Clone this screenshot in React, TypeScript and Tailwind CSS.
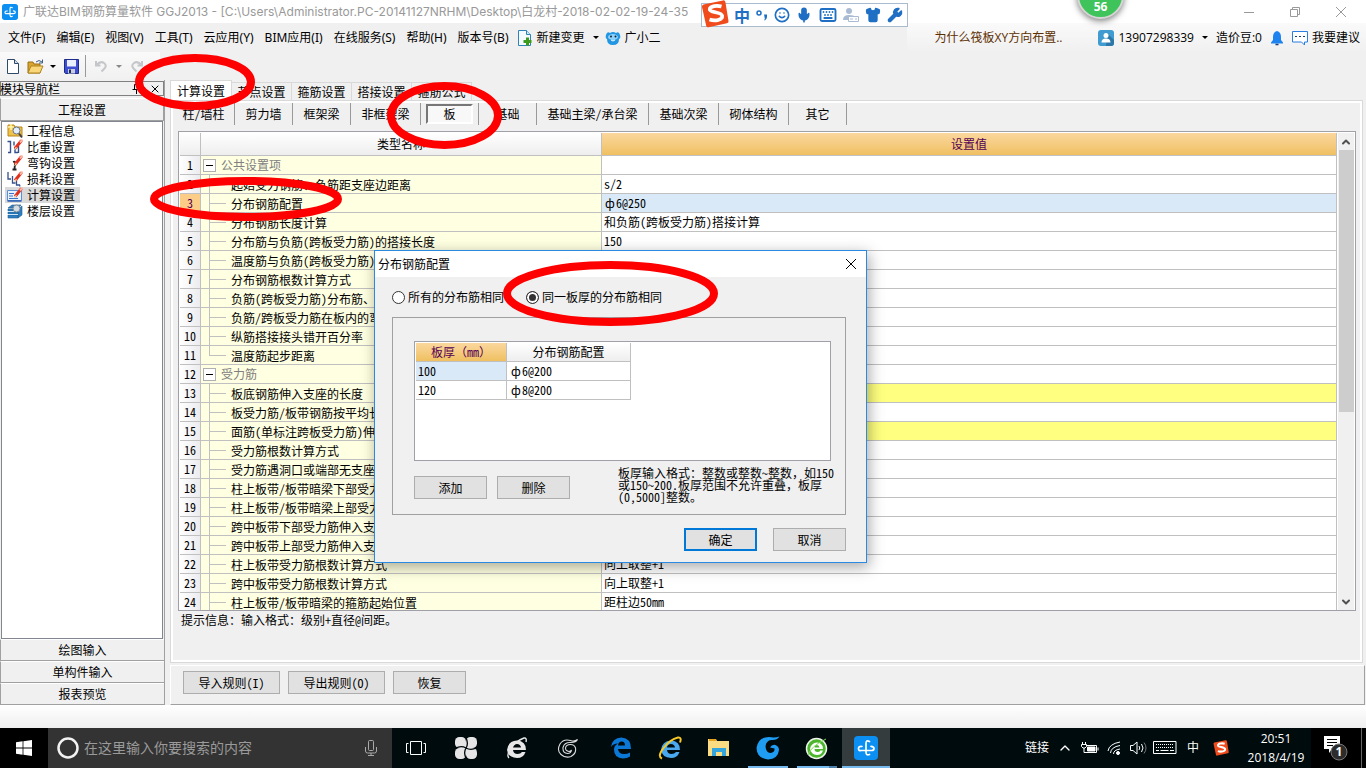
import React from "react";
import { ChevronDown, ChevronUp, Keyboard, Mic, Shirt, Smile, Wrench, X } from "lucide-react";

const menus = [
  "文件(F)",
  "编辑(E)",
  "视图(V)",
  "工具(T)",
  "云应用(Y)",
  "BIM应用(I)",
  "在线服务(S)",
  "帮助(H)",
  "版本号(B)",
];

const mainTabs = ["计算设置", "节点设置", "箍筋设置", "搭接设置", "箍筋公式"];

const subTabs = [
  { label: "柱/墙柱", width: "w-[62px]" },
  { label: "剪力墙", width: "w-[58px]" },
  { label: "框架梁", width: "w-[58px]" },
  { label: "非框架梁", width: "w-[70px]" },
  { label: "板", width: "w-[58px]" },
  { label: "基础", width: "w-[58px]" },
  { label: "基础主梁/承台梁", width: "w-[112px]" },
  { label: "基础次梁", width: "w-[70px]" },
  { label: "砌体结构", width: "w-[70px]" },
  { label: "其它", width: "w-[58px]" },
];

interface SettingRow {
  name: string;
  value?: React.ReactNode;
  group?: boolean;
  last?: boolean;
  changed?: boolean;
}

// Rebar grade sign takes a whole character cell in front of the half-width figures
const Rebar = ({ spec }: { spec: string }) => (
  <>
    <span className="inline-block w-3 text-center">ф</span>
    {spec}
  </>
);

const Wide = ({ children }: { children: React.ReactNode }) => (
  <span className="[font-feature-settings:normal]">{children}</span>
);

const rows: SettingRow[] = [
  { name: "公共设置项", group: true },
  { name: "起始受力钢筋、负筋距支座边距离", value: "s/2" },
  { name: "分布钢筋配置", value: <Rebar spec="6@250" /> },
  { name: "分布钢筋长度计算", value: "和负筋(跨板受力筋)搭接计算" },
  { name: "分布筋与负筋(跨板受力筋)的搭接长度", value: "150" },
  { name: "温度筋与负筋(跨板受力筋)的搭接长度" },
  { name: "分布钢筋根数计算方式" },
  { name: "负筋(跨板受力筋)分布筋、温度筋" },
  { name: "负筋/跨板受力筋在板内的弯折长度" },
  { name: "纵筋搭接接头错开百分率" },
  { name: "温度筋起步距离", last: true },
  { name: "受力筋", group: true },
  { name: "板底钢筋伸入支座的长度", changed: true },
  { name: "板受力筋/板带钢筋按平均长度计算" },
  { name: "面筋(单标注跨板受力筋)伸入支座", changed: true },
  { name: "受力筋根数计算方式" },
  { name: "受力筋遇洞口或端部无支座时" },
  { name: "柱上板带/板带暗梁下部受力筋" },
  { name: "柱上板带/板带暗梁上部受力筋" },
  { name: "跨中板带下部受力筋伸入支座" },
  { name: "跨中板带上部受力筋伸入支座" },
  { name: "柱上板带受力筋根数计算方式", value: "向上取整+1" },
  { name: "跨中板带受力筋根数计算方式", value: "向上取整+1" },
  { name: "柱上板带/板带暗梁的箍筋起始位置", value: "距柱边50mm" },
];

const BrandMark = ({ className = "" }: { className?: string }) => (
  <svg viewBox="0 0 24 24" className={className}>
    <rect width="24" height="24" rx="4" fill="#0c8ff2" />
    <path
      d="M15.5 5.500Q12 3.500 12 7.500v8.500q0 4 3.500 2.500M8 10.500Q4.500 10 4.500 12.500T7 14.500h10.500q2.500 0 2.500-2t-3-2.200"
      fill="none"
      stroke="#fff"
      strokeWidth="1.700"
      strokeLinecap="round"
    />
  </svg>
);

const SogouMark = ({ className = "" }: { className?: string }) => (
  <svg viewBox="0 0 28 28" className={className}>
    <path
      d="M2.500 4.500 22 .4q2-.3 2.400 1.700L27.500 21q.3 2-1.600 2.300L7.600 27.300q-2 .4-2.400-1.600L1 7Q.6 5 2.500 4.500Z"
      fill="#f04b1c"
    />
    <path
      d="M20.500 6.500c-4-1.200-11.500-.8-11.800 2.800-.3 3.500 11.800 2.300 12.500 6.500.6 4-7 5.700-12.700 3.700"
      fill="none"
      stroke="#fff"
      strokeWidth="3.600"
    />
  </svg>
);

const Caret = ({ className = "border-t-black" }: { className?: string }) => (
  <span className={`block h-0 w-0 border-x-[3px] border-t-[3px] border-x-transparent ${className}`} />
);

const Pencil = () => (
  <>
    <path d="M14.500 1.500 8 9.500" stroke="#e0301e" strokeWidth="3" />
    <path d="M15.500.5 13 3.500" stroke="#ffb3a4" strokeWidth="2" />
    <path d="m9 7.500-2.500 4 3.500-2.500" fill="#f3cf9b" />
  </>
);

const navItems: { label: string; icon: React.ReactNode }[] = [
  {
    label: "工程信息",
    icon: (
      <>
        <path d="M1 2h6l1 2h7v9H1z" fill="#f0c24a" stroke="#b98518" />
        <path d="M4 1v6M1 4h6" stroke="#fff3a8" strokeWidth="1.500" />
        <circle cx="9.500" cy="7.500" r="3.500" fill="#e2effb" stroke="#64748b" />
        <path d="m12 10.500 3 4" stroke="#444" strokeWidth="2" />
      </>
    ),
  },
  {
    label: "比重设置",
    icon: (
      <>
        <path d="M.5 2.500h3v11H1M10 8.500H8v5h3M7 2.500v4M11.500 7v7" fill="none" stroke="#35518d" strokeWidth="1.400" />
        <Pencil />
      </>
    ),
  },
  {
    label: "弯钩设置",
    icon: (
      <>
        <path d="M6 7q3-1 2 2l-.5 5M5.500 14.500h4" fill="none" stroke="#222" strokeWidth="1.800" />
        <Pencil />
      </>
    ),
  },
  {
    label: "损耗设置",
    icon: (
      <>
        <path d="M1 1v7h3M5.500 5v7h3M9.500 8v6h3l.5 1.500" fill="none" stroke="#35518d" strokeWidth="1.300" />
        <Pencil />
      </>
    ),
  },
  {
    label: "计算设置",
    icon: (
      <>
        <path d="M.5 3.500h14v10H.5z" fill="#e8f2ff" stroke="#5b8fd6" />
        <path d="M2 6.500h5M2 9h4M2 11.500h9" stroke="#3b74c4" />
        <path d="M.5 14h14" stroke="#2b5fb0" strokeWidth="1.500" />
        <Pencil />
      </>
    ),
  },
  {
    label: "楼层设置",
    icon: (
      <>
        <path
          d="m1 5 4-3h9l-3 3zM1 6h10v2H1zM1 9h10v2H1zM1 12h10v3H1zM11 6l4-3v9l-4 3z"
          fill="#2f7fc0"
          stroke="#1c5e96"
          strokeWidth=".6"
        />
        <path d="M1 8.500h10M1 11.500h10" stroke="#cfe6f7" />
        <circle cx="9.500" cy="5.500" r="3.500" fill="#d5dde4" stroke="#7c8791" />
      </>
    ),
  },
];

function TitleBar() {
  return (
    <header className="flex h-[23px] shrink-0 items-center justify-between bg-white pl-0.5 font-[Inter,Noto_Sans_CJK_SC,sans-serif]">
      <div className="flex items-center gap-[5px]">
        <BrandMark className="h-4 w-4" />
        <h1 className="whitespace-nowrap text-xs leading-4 text-[#999]">
          广联达BIM钢筋算量软件 GGJ2013 - [C:\Users\Administrator.PC-20141127NRHM\Desktop\白龙村-2018-02-02-19-24-35
        </h1>
      </div>
      <div className="flex items-center gap-[34px] pr-[19px] text-[#999]">
        <button aria-label="最小化">
          <svg viewBox="0 0 12 12" className="h-3 w-3" stroke="currentColor" fill="none">
            <path d="M1 6.500h10" />
          </svg>
        </button>
        <button aria-label="还原">
          <svg viewBox="0 0 12 12" className="h-3 w-3" stroke="currentColor" fill="none">
            <path d="M1.500 3.500h7v7h-7zM3.500 3.500v-2h7v7h-2" />
          </svg>
        </button>
        <button aria-label="关闭">
          <svg viewBox="0 0 12 12" className="h-3 w-3" stroke="currentColor" fill="none">
            <path d="m1 1 10 10M11 1 1 11" />
          </svg>
        </button>
      </div>
    </header>
  );
}

function MenuBar() {
  return (
    <nav className="flex h-[29px] shrink-0 items-center whitespace-nowrap pl-2 font-[Noto_Sans,Noto_Sans_CJK_SC,sans-serif] text-xs leading-4 text-black">
      <div className="flex items-center gap-[11px]">
        {menus.map((menu) => (
          <button key={menu}>{menu}</button>
        ))}
      </div>
      <button className="ml-2 flex items-center gap-1">
        <svg viewBox="0 0 16 16" className="h-4 w-4">
          <path d="M1.500.5h8l4 4v11h-12z" fill="#f4faff" stroke="#2e84b8" />
          <path d="M9.500.5v4h4" fill="#cfe5f4" stroke="#2e84b8" />
          <path d="M10.500 7.500v8M6.500 11.500h8" stroke="#3c9b1c" strokeWidth="3" />
        </svg>
        新建变更
        <Caret className="ml-1 border-t-black" />
      </button>
      <button className="ml-1.5 flex items-center gap-1">
        <svg viewBox="0 0 16 16" className="h-4 w-4">
          <path d="M1 5q1-4 4-2 3-2 6 0 3-2 4 2 1 3-1 4 0 6-6 6t-6-6Q0 8 1 5Z" fill="#2196e3" />
          <ellipse cx="8" cy="7" rx="5" ry="3" fill="#8ed2fa" />
          <circle cx="6" cy="6.500" r="1" fill="#123" />
          <circle cx="10.500" cy="6.500" r="1" fill="#123" />
          <path d="M6 10q2 2 4 0" fill="none" stroke="#fff" />
        </svg>
        广小二
      </button>
      <div className="ml-auto flex h-full items-center bg-gradient-to-b from-[#fafafa] to-[#f0f0f0] pr-1.5 font-[Open_Sans,Noto_Sans_CJK_SC,sans-serif]">
        <a href="#question" className="px-7 text-[#5c2e00]">
          为什么筏板XY方向布置..
        </a>
        <button className="flex items-center gap-1 pl-2">
          <svg viewBox="0 0 16 16" className="h-4 w-4">
            <rect width="16" height="16" rx="3" fill="#3f9bd0" />
            <path d="m9 3 7 7v3q0 3-3 3H8z" fill="#2b78a8" />
            <circle cx="8" cy="5.500" r="2.500" fill="#fff" />
            <path d="M3.500 12.500q0-4 4.500-4t4.500 4z" fill="#fff" />
          </svg>
          13907298339
          <Caret className="ml-1 border-t-black" />
        </button>
        <span className="ml-2">造价豆:0</span>
        <button aria-label="消息" className="ml-2">
          <svg viewBox="0 0 14 16" className="h-4 w-3.5">
            <path d="M7 1q4 1 4 6v3l2 2.500v1H1v-1L3 10V7q0-5 4-6Z" fill="#1e83ef" />
            <path d="M5.500 14.500h3" stroke="#163d78" strokeWidth="1.500" />
          </svg>
        </button>
        <button className="ml-2 flex items-center gap-1">
          <svg viewBox="0 0 16 16" className="h-4 w-4" fill="none" stroke="#2b7de0">
            <path d="M.5 1.500h15v10.500h-3v3l-3-3h-9z" fill="#fff" />
            <path d="M3 6.500h10" stroke="#163d78" strokeDasharray="2 2" />
          </svg>
          我要建议
        </button>
      </div>
    </nav>
  );
}

function ToolBar() {
  return (
    <div className="flex h-7 w-40 shrink-0 items-center bg-gradient-to-b from-[#fafafa] to-[#f0f0f0] pl-[7px]">
      <button aria-label="新建">
        <svg viewBox="0 0 12 15" className="h-[15px] w-3">
          <path d="M.5.5h7l4 4v10H.5z" fill="#fff" stroke="#2f4a68" />
          <path d="M7.500.5v4h4" fill="#cddceb" stroke="#2f4a68" />
        </svg>
      </button>
      <button aria-label="打开" className="ml-2">
        <svg viewBox="0 0 17 15" className="h-[15px] w-[17px]">
          <path d="M1 14V3h5l1 2h6v9z" fill="#d9a531" stroke="#9a6f14" />
          <path d="m1 14 3-7h12l-3 7z" fill="#f9d779" stroke="#b08320" />
          <path d="M9 3q3-3 6 0m.5-2.500V4H12" fill="none" stroke="#3f5f86" />
        </svg>
      </button>
      <Caret className="ml-1.5 border-t-black" />
      <button aria-label="保存" className="ml-2">
        <svg viewBox="0 0 15 15" className="h-[15px] w-[15px]">
          <path d="M.5.500h14v14h-13l-1-1z" fill="#3d4fd0" stroke="#1d2b88" />
          <path d="M3 1h9v6.500H3z" fill="#e9efff" />
          <path d="M4 10h7v4.500H4z" fill="#c8cee0" />
          <path d="M5 10.500h2v3.500H5z" fill="#1d2b60" />
        </svg>
      </button>
      <span className="ml-1.5 h-[22px] w-px bg-[#999]" />
      <button aria-label="撤销" className="ml-2" disabled>
        <svg viewBox="0 0 14 14" className="h-3.5 w-3.5" fill="none" stroke="#c4c6c9" strokeWidth="2">
          <path d="M2 2v4.500h4.500M2.500 6q4-4.500 7.500-2t0 6L7.500 12.500" />
        </svg>
      </button>
      <Caret className="ml-2 border-t-[#888]" />
      <button aria-label="重做" className="ml-2" disabled>
        <svg viewBox="0 0 14 14" className="h-3.5 w-3.5" fill="none" stroke="#c4c6c9" strokeWidth="2">
          <path d="M12 2v4.500H7.500M11.500 6q-4-4.500-7.500-2t0 6l2.500 2.500" />
        </svg>
      </button>
    </div>
  );
}

function ModulePanel() {
  return (
    <aside className="flex w-[165px] shrink-0 flex-col border-r border-[#a0a0a0] pt-px">
      <div className="flex h-[15px] items-center border border-[#808080] pr-0.5">
        <h2 className="-ml-px leading-3">模块导航栏</h2>
        <button aria-label="固定面板" className="ml-auto">
          <svg viewBox="0 0 9 11" className="h-[11px] w-[9px]" fill="none" stroke="#000">
            <path d="M2.500 6.500v-5h4v5M.5 6.500h8M4.500 7v4M5.500 2v4" />
          </svg>
        </button>
        <button aria-label="关闭面板" className="ml-2">
          <X className="h-3 w-3" strokeWidth={2} />
        </button>
      </div>
      <button className="mt-0.5 h-[23px] border border-[#a0a0a0] border-t-white leading-4">工程设置</button>
      <div className="mx-px min-h-0 flex-1 border border-[#82878f] bg-white pl-[3px] pt-px">
        <ul>
          {navItems.map((item) => (
            <li key={item.label}>
              <a
                href="#settings"
                className={`flex h-4 w-[75px] items-center gap-1 pl-0.5 leading-4 ${
                  item.label === "计算设置" ? "bg-[#d9d9d9]" : ""
                }`}
              >
                <svg viewBox="0 0 16 16" className="h-4 w-4 shrink-0">
                  {item.icon}
                </svg>
                <span className="whitespace-nowrap">{item.label}</span>
              </a>
            </li>
          ))}
        </ul>
      </div>
      {["绘图输入", "单构件输入", "报表预览"].map((label) => (
        <button key={label} className="h-[22px] border-b border-l border-t border-[#a0a0a0] border-t-white leading-4">
          {label}
        </button>
      ))}
    </aside>
  );
}

function NameCell({ row }: { row: SettingRow }) {
  if (row.group) {
    return (
      <div className="flex h-[18px] items-center gap-[5px] pl-0.5 text-[#808080]">
        <button
          aria-label="折叠"
          className="flex h-[13px] w-[13px] items-center justify-center border border-[#b0b0b0] bg-white"
        >
          <span className="h-px w-[7px] bg-black" />
        </button>
        {row.name}
      </div>
    );
  }
  return (
    <div className="flex h-[19px] items-center pl-2">
      <span className={row.last ? "h-2.5 w-px self-start bg-[#c0c0c0]" : "w-px self-stretch bg-[#c0c0c0]"} />
      <span className="h-px w-4 bg-[#c0c0c0]" />
      <span className="ml-[5px]">{row.name}</span>
    </div>
  );
}

function SettingsGrid() {
  return (
    <div className="ml-[5px] mr-1 flex min-h-0 flex-1 border border-[#a0a0a8] bg-white pl-px pt-px">
      <div className="min-w-0 flex-1 overflow-hidden">
        <table className="w-full table-fixed border-separate border-spacing-0 whitespace-nowrap leading-4">
          <colgroup>
            <col className="w-[21px]" />
            <col className="w-[401px]" />
            <col />
          </colgroup>
          <thead>
            <tr className="h-[23px]">
              <th
                aria-label="序号"
                className="border-b border-r border-[#c0c0c0] bg-gradient-to-b from-white to-[#eee] p-0"
              />
              <th className="border-b border-r border-[#c0c0c0] bg-gradient-to-b from-white to-[#eee] p-0 font-normal">
                类型名称
              </th>
              <th className="border-b border-r border-[#c0c0c0] bg-gradient-to-b from-[#fbd79d] to-[#efc060] p-0 font-normal text-[#550055]">
                设置值
              </th>
            </tr>
          </thead>
          <tbody>
            {rows.map((row, index) => (
              <tr key={index} className="h-[19px]">
                <td
                  className={`border-b border-r border-[#c0c0c0] p-0 text-center ${
                    index === 2 ? "bg-[#fccd86] text-[#550055]" : "bg-gradient-to-r from-white to-[#ececf0]"
                  }`}
                >
                  {index + 1}
                </td>
                <td className="h-[19px] overflow-hidden border-b border-r border-[#c0c0c0] bg-[#ffffe1] p-0">
                  <div className="h-[18px] overflow-hidden">
                    <NameCell row={row} />
                  </div>
                </td>
                <td
                  className={`border-b border-r border-[#c0c0c0] p-0 pl-0.5 ${
                    index === 2 ? "bg-[#d9e9f8]" : row.changed ? "bg-[#ffff80]" : "bg-white"
                  }`}
                >
                  {row.value}
                </td>
              </tr>
            ))}
          </tbody>
        </table>
      </div>
      <div className="mx-px flex w-4 flex-col items-center bg-[#f0f0f0]">
        <button aria-label="向上滚动" className="flex h-[17px] items-center">
          <ChevronUp className="h-3 w-3 text-[#505050]" strokeWidth={4} />
        </button>
        <div className="h-[262px] w-[15px] bg-[#cdcdcd]" />
        <button aria-label="向下滚动" className="mt-auto flex h-[17px] items-center">
          <ChevronDown className="h-3 w-3 text-[#505050]" strokeWidth={4} />
        </button>
      </div>
    </div>
  );
}

const PushButton = ({ children, className = "w-[73px]" }: { children: React.ReactNode; className?: string }) => (
  <button className={`h-[23px] border border-[#adadad] bg-[#e1e1e1] leading-4 ${className}`}>{children}</button>
);

function SettingsPanel() {
  return (
    <main className="ml-[5px] flex min-w-0 flex-1 flex-col">
      <div role="tablist" className="flex h-5 items-end">
        {mainTabs.map((tab, index) => (
          <button
            key={tab}
            role="tab"
            aria-selected={index === 0}
            className={
              index === 0
                ? "h-5 w-[62px] border border-b-0 border-[#d9d9d9] bg-white leading-4"
                : "h-[18px] w-[60px] whitespace-nowrap border border-b-0 border-l-0 border-[#d9d9d9] leading-4"
            }
          >
            {tab}
          </button>
        ))}
      </div>
      <div className="mr-[3px] flex min-h-0 flex-1 flex-col border border-[#d9d9d9] bg-white p-0.5">
        <div className="flex min-h-0 flex-1 flex-col bg-[#f0f0f0]">
          <div className="mb-1.5 flex h-[22px] shrink-0">
            {subTabs.map((tab) => (
              <div
                key={tab.label}
                className={`flex items-center justify-center border-r border-[#999] ${tab.width}`}
              >
                <button
                  className={
                    tab.label === "板"
                      ? "h-5 w-[47px] border-2 border-b-white border-l-[#777] border-r-white border-t-[#777] bg-[#f8f8f8] leading-4"
                      : "whitespace-nowrap leading-4"
                  }
                >
                  {tab.label}
                </button>
              </div>
            ))}
          </div>
          <SettingsGrid />
          <p className="h-[49px] shrink-0 pl-2 pt-px leading-4">提示信息：输入格式：级别+直径@间距。</p>
        </div>
      </div>
      <div className="mr-px mt-0.5 flex h-10 shrink-0 gap-2 border border-[#a0a0a0] border-l-white border-t-white pl-3 pt-[5px]">
        <PushButton className="w-[97px]">导入规则(I)</PushButton>
        <PushButton className="w-[97px]">导出规则(O)</PushButton>
        <PushButton>恢复</PushButton>
      </div>
    </main>
  );
}

const radioClass =
  "h-[13px] w-[13px] appearance-none rounded-full border border-[#333] bg-white checked:bg-[#333] checked:shadow-[inset_0_0_0_2px_white]";

function RebarDialog() {
  return (
    <section
      role="dialog"
      aria-label="分布钢筋配置"
      className="absolute left-[374px] top-[250px] w-[493px] border border-[#2a8ae2] bg-[#f0f0f0] pb-[11px] shadow-[2px_4px_14px_rgba(0,0,0,0.35)]"
    >
      <header className="flex h-[26px] items-center justify-between bg-white pl-[3px] pr-2.5">
        <h2 className="leading-4">分布钢筋配置</h2>
        <button aria-label="关闭">
          <svg viewBox="0 0 10 10" className="h-2.5 w-2.5" stroke="#000" fill="none">
            <path d="m0 0 10 10M10 0 0 10" />
          </svg>
        </button>
      </header>
      <div className="flex h-10 items-center gap-[22px] pl-[17px]">
        <label className="flex items-center gap-[3px] leading-4">
          <input type="radio" name="scope" className={radioClass} />
          所有的分布筋相同
        </label>
        <label className="flex items-center gap-[3px] leading-4">
          <input type="radio" name="scope" defaultChecked className={radioClass} />
          同一板厚的分布筋相同
        </label>
      </div>
      <div className="ml-[17px] mr-5 border border-[#a0a0a0] px-[21px] pb-[15px] pt-[23px]">
        <div className="h-[120px] w-[417px] border border-[#a0a0a8] bg-white pl-px pt-px">
          <table className="table-fixed border-separate border-spacing-0 leading-4">
            <thead>
              <tr className="h-[19px]">
                <th className="w-[91px] border-b border-r border-[#c0c0c0] bg-gradient-to-b from-[#fbd79d] to-[#efc060] p-0 font-normal text-[#550055]">
                  板厚<Wide>（</Wide>mm<Wide>）</Wide>
                </th>
                <th className="w-[124px] border-b border-r border-[#c0c0c0] bg-gradient-to-b from-white to-[#eee] p-0 font-normal">
                  分布钢筋配置
                </th>
              </tr>
            </thead>
            <tbody>
              <tr className="h-[19px]">
                <td className="border-b border-r border-[#c0c0c0] bg-[#d9e9f8] p-0 pl-0.5">100</td>
                <td className="border-b border-r border-[#c0c0c0] p-0 pl-[3px]">
                  <Rebar spec="6@200" />
                </td>
              </tr>
              <tr className="h-[19px]">
                <td className="border-b border-r border-[#c0c0c0] p-0 pl-0.5">120</td>
                <td className="border-b border-r border-[#c0c0c0] p-0 pl-[3px]">
                  <Rebar spec="8@200" />
                </td>
              </tr>
            </tbody>
          </table>
        </div>
        <div className="flex h-[38px] items-start pt-1.5">
          <div className="flex gap-2.5 pt-[9px]">
            <PushButton>添加</PushButton>
            <PushButton>删除</PushButton>
          </div>
          <p className="-mr-3 ml-auto w-[218px] whitespace-nowrap leading-3">
            板厚输入格式：整数或整数~整数<Wide>，</Wide>如150
            <br />
            或150~200.板厚范围不允许重叠<Wide>，</Wide>板厚
            <br />
            (0,5000]整数。
          </p>
        </div>
      </div>
      <div className="mr-5 mt-[13px] flex justify-end gap-4">
        <button className="h-[23px] w-[73px] border-2 border-[#0078d7] bg-[#e1e1e1] leading-4">确定</button>
        <PushButton>取消</PushButton>
      </div>
    </section>
  );
}

function InputMethodBar() {
  return (
    <div className="absolute left-[701px] top-0 flex h-[29px] items-center">
      <div className="flex h-6 w-[207px] items-center justify-between border border-[#a9bccf] bg-white pl-8 pr-1 text-[#1f6fc4]">
        <span className="text-base font-bold leading-4">中</span>
        <svg viewBox="0 0 12 12" className="h-3 w-3">
          <circle cx="3" cy="4" r="2" fill="none" stroke="currentColor" strokeWidth="1.500" />
          <path d="M8 5.500h3v2q0 3-3 4 1.500-2 .5-3.500Z" fill="currentColor" />
        </svg>
        <Smile className="h-4 w-4" strokeWidth={2.5} />
        <Mic className="h-4 w-4" strokeWidth={2.5} fill="currentColor" />
        <Keyboard className="h-[18px] w-[18px]" strokeWidth={2.5} />
        <svg viewBox="0 0 16 16" className="h-4 w-4 text-[#a9bcd4]">
          <circle cx="6" cy="4" r="3" fill="currentColor" />
          <path d="M0 13q0-5 6-5t5 2v3z" fill="currentColor" />
          <path d="M5.500 9.500h10v5h-10zM7 12h3M12 12h2" fill="#fff" stroke="currentColor" />
        </svg>
        <Shirt className="h-4 w-4" fill="currentColor" />
        <Wrench className="h-4 w-4" fill="currentColor" />
      </div>
      <SogouMark className="absolute left-0 top-0 h-7 w-7" />
    </div>
  );
}

const Ring = ({ className, width, height }: { className: string; width: number; height: number }) => (
  <svg
    viewBox={`0 0 ${width} ${height}`}
    className={`pointer-events-none absolute ${className}`}
    fill="none"
    stroke="#fe0000"
    strokeWidth="8"
  >
    <ellipse cx={width / 2} cy={height / 2} rx={width / 2 - 4} ry={height / 2 - 4} />
  </svg>
);

const TaskButton = ({
  label,
  className = "",
  children,
}: {
  label: string;
  className?: string;
  children: React.ReactNode;
}) => (
  <button aria-label={label} className={`flex h-10 w-12 items-center justify-center ${className}`}>
    {children}
  </button>
);

function TaskBar() {
  return (
    <footer className="flex h-10 shrink-0 bg-[#000b0d] font-[Open_Sans,Noto_Sans_CJK_SC,sans-serif] text-white">
      <TaskButton label="开始" className="bg-black">
        <svg viewBox="0 0 16 16" className="h-4 w-4" fill="#fff">
          <path d="M0 2.200 6.600 1.300v6.300H0zM7.400 1.200 16 0v7.600H7.400zM0 8.400h6.600v6.300L0 13.800zM7.400 8.400H16V16l-8.600-1.200z" />
        </svg>
      </TaskButton>
      <div className="flex w-[344px] items-center bg-[#333] pl-2 pr-3.5">
        <svg viewBox="0 0 24 24" className="h-6 w-6 shrink-0">
          <circle cx="12" cy="12" r="9.500" fill="none" stroke="#f2f2f2" strokeWidth="2.500" />
        </svg>
        <input
          aria-label="搜索"
          placeholder="在这里输入你要搜索的内容"
          className="ml-1 min-w-0 flex-1 bg-transparent text-sm leading-5 text-white placeholder:text-[#9a9a9a] focus:outline-none"
        />
        <svg viewBox="0 0 14 18" className="h-[18px] w-3.5 shrink-0" fill="none" stroke="#aaa">
          <rect x="4.500" y="1.500" width="5" height="10" rx="1" />
          <path d="M1.500 8v4q0 2 2 2h7q2 0 2-2V8M7 14v3M4 16.500h6" />
        </svg>
      </div>
      <TaskButton label="任务视图">
        <svg viewBox="0 0 20 16" className="h-4 w-5" fill="none" stroke="#fff">
          <path d="M4.500 1.500h11v13h-11zM2.500 3.500h-2v9h2M17.500 3.500h2v9h-2" />
        </svg>
      </TaskButton>
      <div className="ml-0.5 flex gap-[3px]">
        <TaskButton label="风车">
          <svg viewBox="0 0 22 22" className="h-[22px] w-[22px]" fill="#e6e6e6">
            <rect width="11" height="11" rx="4.500" />
            <rect x="11" width="11" height="11" rx="4.500" />
            <rect y="11" width="11" height="11" rx="4.500" />
            <rect x="11" y="11" width="11" height="11" rx="4.500" />
            <path d="M5 5h12v12H5z" />
            <path
              d="M11 11Q14 6 10.500 0M11 11q5 3 11-.5M11 11q-3 5 .5 11M11 11Q6 8 0 11.500"
              fill="none"
              stroke="#000b0d"
              strokeWidth="1.300"
            />
          </svg>
        </TaskButton>
        <TaskButton label="浏览器">
          <svg viewBox="0 0 24 24" className="h-6 w-6">
            <path
              d="M2 14Q3 5 12 4.500q9 .5 9 9.500H8q.5 4 4.500 4 3 0 4.500-2h3.500q-2 6-8.500 6-9-.5-10-8Zm6-2.500h8q-.5-3.500-4-3.500t-4 3.500Z"
              fill="#e8e8e8"
              fillRule="evenodd"
            />
            <path d="M4 22q-3-3 2-10T19 2q3-.5 2 4" fill="none" stroke="#e8e8e8" strokeWidth="1.400" />
          </svg>
        </TaskButton>
        <TaskButton label="广联达">
          <svg viewBox="0 0 22 22" className="h-[22px] w-[22px]" fill="none" stroke="#dcdcdc" strokeWidth="1.100">
            <path d="M20.500 2.500q-3 2.500-7 1Q6.500 1.500 3 7q-3.500 6.500 1 10.500t10 2q5.500-3 4.500-8.500-1-3.500-5-3.500-4.500 0-5 3.500 0 3 3.500 3.500 2 0 2.500-1.500-.5 3.500-4 3.500-5-.5-4.500-6Q7.500 5 14 5.500q5 0 6.500-3Z" />
          </svg>
        </TaskButton>
      </div>
      <div className="ml-[5px] flex gap-px">
        <TaskButton label="Edge">
          <svg viewBox="0 0 22 24" className="h-6 w-[22px]">
            <path
              d="M1 11Q2 2 11.500 1.500 21 2 21 13H8q.5 5 6 5 3.500 0 6-1.500v4q-3 2-7 2-9-.5-9-9 0-4 4-6Q3 7.500 1 11ZM8 9.500h7q0-4-3.300-4T8 9.500Z"
              fill="#0b78d8"
              fillRule="evenodd"
            />
          </svg>
        </TaskButton>
        <TaskButton label="Internet Explorer">
          <svg viewBox="0 0 24 24" className="h-6 w-6">
            <path
              d="M3 14Q4 5 13 4.500q9 .5 9 9.500H9q.5 4 4.500 4 3 0 4.500-2h3.500q-2 6-8.500 6-9-.5-10-8Zm6-2.500h8q-.5-3.500-4-3.500t-4 3.500Z"
              fill="#4aa9ee"
              fillRule="evenodd"
            />
            <path d="M4 22.500q-5-2 1.500-10.500T20 1.500q4-.5 2 5" fill="none" stroke="#f6c928" strokeWidth="2" />
          </svg>
        </TaskButton>
        <TaskButton label="文件资源管理器">
          <svg viewBox="0 0 22 20" className="h-5 w-[22px]">
            <path d="M0 1h8l1 2h12v15H0z" fill="#fbdc83" />
            <path d="M1 1h7v2H1z" fill="#e8a31e" />
            <path d="M4 10h14v8h-4v-4H8v4H4z" fill="#33a5dc" />
          </svg>
        </TaskButton>
        <TaskButton label="广联达客户端" className="relative">
          <svg viewBox="0 0 24 24" className="h-6 w-6">
            <path
              d="M23.500.5q-2.500 4-8 3.500-5.500.5-6 6.500.5 6 5 6.500 4.500-.5 4-4.500l-4.500-1q2-3.500 5.500-2.500 3.500 1.500 3.500 5-1 9-11 9.500Q1 22.500.5 12 2 1 13 1q6 1 10.500-.5Z"
              fill="#1f9df2"
            />
          </svg>
          <span className="absolute inset-x-1 bottom-0 h-0.5 bg-[#76b9ed]" />
        </TaskButton>
        <TaskButton label="360浏览器" className="relative">
          <svg viewBox="0 0 24 24" className="h-6 w-6">
            <circle cx="11.500" cy="12.500" r="10" fill="#4cb52e" stroke="#eef5ea" strokeWidth="1.500" />
            <path
              d="M5 13q1-6 7-6.500 6 .5 6 6.500H9.500q0 3 3 3 2 0 3-1.500H18q-1.500 4.500-6 4.500-6-.5-7-6Zm4.500-1.500h5q-.3-2.500-2.500-2.500t-2.500 2.500Z"
              fill="#fff"
              fillRule="evenodd"
            />
            <path d="M3 19q3-9 18-16" fill="none" stroke="#7ed957" />
          </svg>
          <span className="absolute inset-x-1 bottom-0 h-0.5 border-r-8 border-[#4d7fa8] bg-[#76b9ed]" />
        </TaskButton>
        <TaskButton label="GGJ2013" className="relative bg-[#353c3e]">
          <BrandMark className="h-6 w-6" />
          <span className="absolute inset-x-0 bottom-0 h-0.5 bg-[#76b9ed]" />
        </TaskButton>
      </div>
      <div className="ml-auto flex items-center text-xs leading-4">
        <span>链接</span>
        <ChevronUp className="ml-2 h-4 w-4" strokeWidth={2} />
        <svg viewBox="0 0 18 14" className="ml-2 h-3.5 w-[18px]" fill="none" stroke="#fff">
          <path d="M5 4.500h10.500v7H5M17 6.500v3" />
          <path d="M6.500 6h7.500v4H6.500z" fill="#fff" />
          <path d="M1.500 1v2M4.500 1v2M.5 3.500h5v2l-1.500 1.500H2L.5 5.500zM3 7v4.500h2" />
        </svg>
        <svg viewBox="0 0 14 14" className="ml-2 h-3.5 w-3.5" fill="none" stroke="#fff">
          <path d="M1 10Q2 3 13 1M3.500 12Q4 6 13 4.500M6.500 13q0-4 6.500-5" />
          <circle cx="11" cy="12" r="1.500" fill="#fff" />
        </svg>
        <svg viewBox="0 0 18 14" className="ml-2 h-3.5 w-[18px]" fill="none" stroke="#fff">
          <path d="M1.500 4.500h2.500l4-3.500v12L4 9.500H1.500zM10 5q1.500 2 0 4M12.500 3q3 4 0 8" />
          <path d="M15 1.500q4 5.500 0 11" stroke="#777" />
        </svg>
        <svg viewBox="0 0 24 14" className="ml-1.5 h-3.5 w-6" fill="none" stroke="#fff">
          <path d="M.5.500h22.500v12H.5z" />
          <path d="M3 3.500h18M3 6.500h18" strokeDasharray="1 1" />
          <path d="M3 9.500h3M7.500 9.500h8M17 9.500h4" />
        </svg>
        <span className="ml-2.5">中</span>
        <SogouMark className="ml-3.5 h-4 w-4" />
        <div className="ml-3 w-[70px] text-center leading-[19px]">
          <p>20:51</p>
          <p>2018/4/19</p>
        </div>
        <button
          aria-label="通知"
          className="relative flex h-10 w-[51px] items-center justify-center border-r border-[#666] bg-black"
        >
          <svg viewBox="0 0 26 26" className="h-[26px] w-[26px]">
            <path d="M1 1h16v13H9l-3 4v-4H1z" fill="#fff" />
            <path d="M4 4.500h10M4 7.500h10M4 10.500h6" stroke="#000" />
            <circle cx="16" cy="17" r="8" fill="#2c2c2c" stroke="#777" />
          </svg>
          <span className="absolute left-[22px] top-4 w-3 text-center font-bold leading-4">1</span>
        </button>
        <span className="h-10 w-1 bg-black" />
      </div>
    </footer>
  );
}

export default function App() {
  return (
    <div className="relative flex h-screen w-full flex-col overflow-hidden bg-[#f0f0f0] font-[Noto_Sans_CJK_SC,sans-serif] text-xs text-black">
      <TitleBar />
      <MenuBar />
      <ToolBar />
      <div className="flex min-h-0 flex-1 [font-feature-settings:'hwid']">
        <ModulePanel />
        <SettingsPanel />
      </div>
      <div className="h-[23px] shrink-0 bg-gradient-to-b from-white to-[#efefef]" />
      <TaskBar />

      <div className="[font-feature-settings:'hwid']">
        <RebarDialog />
      </div>
      <InputMethodBar />
      <div className="absolute -top-7 left-[1077px] flex h-[47px] w-[47px] items-end justify-center rounded-full border-2 border-[#d5d5d5] bg-[#3fc45c] pb-0.5 font-[Open_Sans,sans-serif] font-bold leading-4 text-white shadow-[0_2px_6px_rgba(0,0,0,0.5)]">
        56
      </div>

      {/* Red highlight rings */}
      <Ring className="left-[135px] top-[54px] h-14 w-[120px]" width={120} height={56} />
      <Ring className="left-[387px] top-[82px] h-[67px] w-[115px]" width={115} height={67} />
      <Ring className="left-[150px] top-[177px] h-11 w-[192px]" width={192} height={44} />
      <Ring className="left-[503px] top-[261px] h-[65px] w-[215px]" width={215} height={65} />
    </div>
  );
}
